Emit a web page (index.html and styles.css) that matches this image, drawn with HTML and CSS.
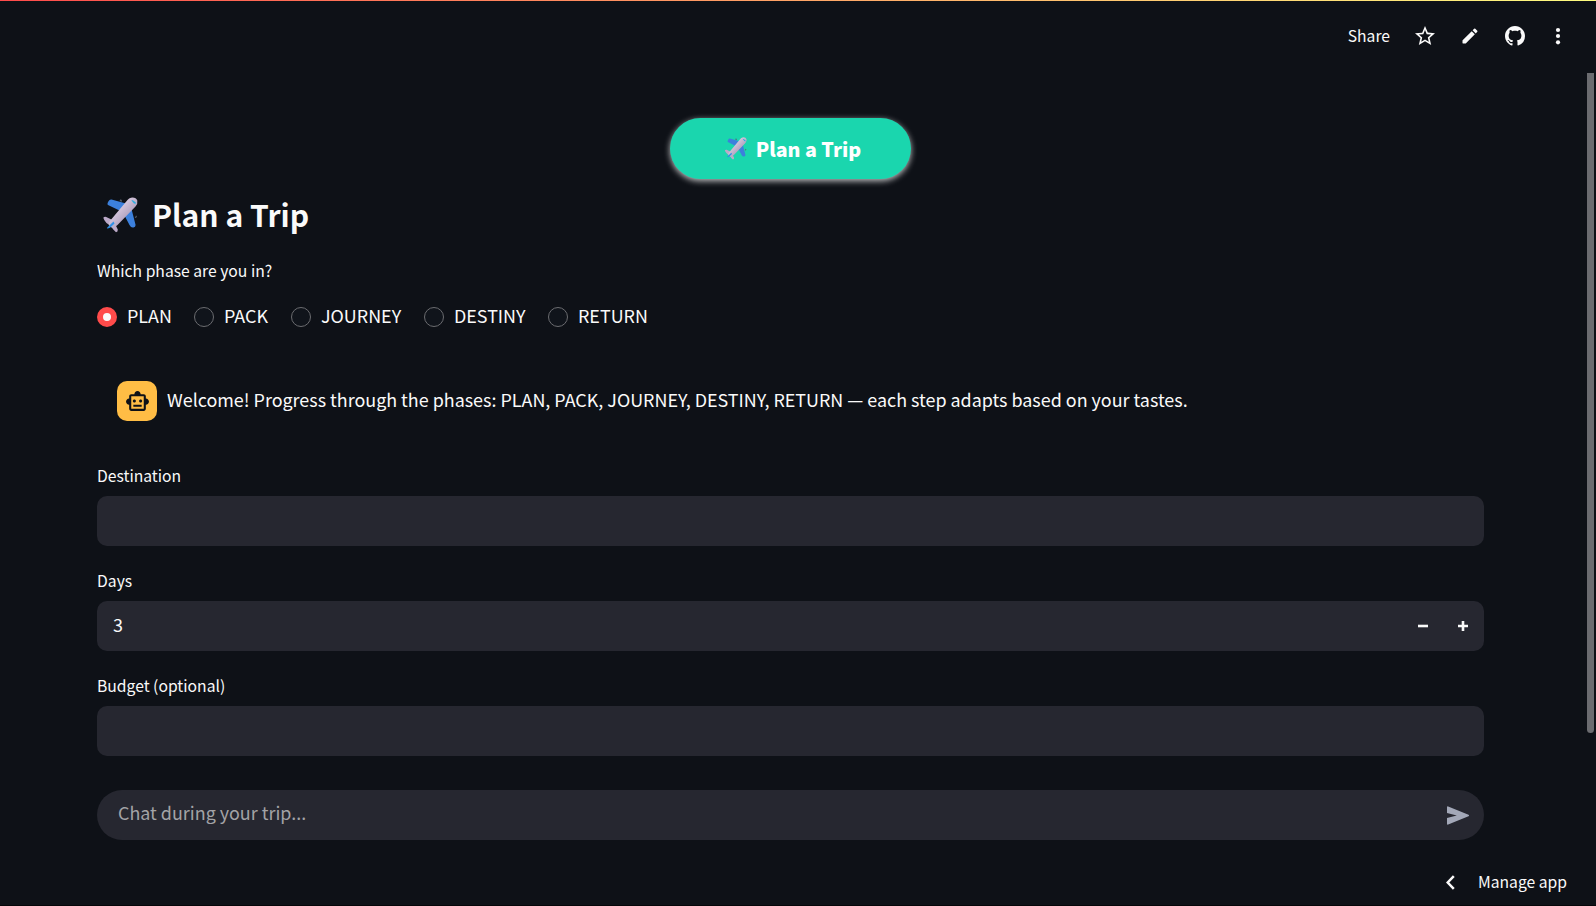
FILE: index.html
```html
<!DOCTYPE html>
<html lang="en">
<head>
<meta charset="utf-8">
<title>Plan a Trip</title>
<link rel="stylesheet" href="styles.css">
</head>
<body>
<svg class="defs" width="0" height="0" aria-hidden="true">
  <defs>
    <linearGradient id="fuselage" x1="0" y1="0" x2="1" y2="1">
      <stop offset="0.3" stop-color="#dccde2"/>
      <stop offset="0.7" stop-color="#ab9cba"/>
    </linearGradient>
    <symbol id="plane" viewBox="0 0 36 36">
      <path d="M17.5 3.2l1.3-.9 1.2 1-.7 2zM34 18.5l1 .8-.8 1.5-1.600.5z" fill="#555b66"/>
      <path d="M6.500 4.200Q7.500 2.200 9.500 2.500L24 6.500 17.500 13.500 6 8Q4.800 7 6.500 4.200z" fill="#3c80dc"/>
      <path d="M29.500 12L33.600 28Q33.500 30 31.500 30.500 29 31 27.500 28L22.500 18.500z" fill="#3c80dc"/>
      <path d="M1.300 20.800Q2.200 19.500 4.200 20L9.500 22.500 12.800 26.500 15.800 32.500Q16 35 14 35.200 10.500 33 9 28.500 3 26.500 1.300 20.800z" fill="#bba9c8"/>
      <path d="M29 .7Q34 0 35.300 3.500 36 7 33.500 9.500L15.500 28Q12 31.500 9.500 30.500 5.300 29 7.500 24.500L25.500 3Q27 1.300 29 .7z" fill="url(#fuselage)"/>
      <path d="M29.300 3.200L30.800 3.200 33.800 5.500 33.500 7 31.800 6.200z" fill="#2daee0"/>
      <path d="M11.500 24.500L5.300 30.500Q4.300 31.600 5.800 31.500L8 30.800 12.500 26.500z" fill="#2f8fe5"/>
    </symbol>
  </defs>
</svg>
<div class="app">
  <div class="rainbow"></div>
  <header class="toolbar">
    <span class="share">Share</span>
    <svg class="tool star" viewBox="0 0 24 24" width="24" height="24"><path d="M22 9.240l-7.190-.620L12 2 9.190 8.630 2 9.240l5.460 4.730L5.820 21 12 17.270 18.180 21l-1.630-7.030L22 9.240zM12 15.400l-3.760 2.270 1-4.280-3.320-2.880 4.380-.380L12 6.100l1.710 4.040 4.380.380-3.320 2.880 1 4.280L12 15.400z"/></svg>
    <svg class="tool pencil" viewBox="0 0 24 24" width="20" height="20"><path d="M3 17.460v3.040c0 .280.220.5.5.5h3.040c.130 0 .260-.050.350-.150L17.810 9.940l-3.750-3.750L3.150 17.100c-.1.100-.150.220-.150.360zM20.710 7.040a.996.996 0 000-1.410l-2.340-2.340a.996.996 0 00-1.410 0l-1.830 1.830 3.750 3.750 1.830-1.830z"/></svg>
    <svg class="tool github" viewBox="0 0 16 16" width="20" height="20"><path d="M8 0C3.580 0 0 3.580 0 8c0 3.540 2.290 6.530 5.470 7.590.4.070.55-.17.55-.38 0-.19-.01-.82-.01-1.490-2.010.37-2.530-.49-2.690-.94-.09-.23-.48-.94-.82-1.130-.28-.15-.68-.52-.01-.53.63-.01 1.080.58 1.230.82.72 1.210 1.870.87 2.330.66.07-.52.28-.87.51-1.070-1.780-.2-3.640-.89-3.640-3.950 0-.87.31-1.590.82-2.150-.08-.2-.36-1.020.08-2.120 0 0 .67-.21 2.200.82.64-.18 1.320-.27 2-.27s1.360.09 2 .27c1.530-1.040 2.200-.82 2.200-.82.44 1.100.16 1.920.08 2.120.51.56.82 1.270.82 2.150 0 3.070-1.870 3.750-3.650 3.950.29.25.54.73.54 1.480 0 1.070-.01 1.930-.01 2.200 0 .21.15.46.55.38A8.010 8.010 0 0016 8c0-4.420-3.580-8-8-8z"/></svg>
    <svg class="tool dots" viewBox="0 0 6 18" width="6" height="18"><circle cx="3" cy="3" r="2.100"/><circle cx="3" cy="9" r="2.100"/><circle cx="3" cy="15.300" r="2.100"/></svg>
  </header>
  <main class="content">
    <button class="cta"><svg class="plane-small"><use href="#plane"/></svg><span class="cta-text">Plan a Trip</span></button>
    <h1 class="title"><svg class="plane-large"><use href="#plane"/></svg><span class="title-text">Plan a Trip</span></h1>
    <div class="label phase-label">Which phase are you in?</div>
    <div class="radios">
      <div class="radio plan"><i class="ring on"></i><span>PLAN</span></div>
      <div class="radio pack"><i class="ring"></i><span>PACK</span></div>
      <div class="radio journey"><i class="ring"></i><span>JOURNEY</span></div>
      <div class="radio destiny"><i class="ring"></i><span>DESTINY</span></div>
      <div class="radio return"><i class="ring"></i><span>RETURN</span></div>
    </div>
    <div class="message">
      <div class="avatar"><svg viewBox="0 0 24 24" width="25" height="25"><path d="M20 9V7c0-1.100-.9-2-2-2h-3c0-1.660-1.340-3-3-3S9 3.340 9 5H6c-1.100 0-2 .9-2 2v2c-1.660 0-3 1.340-3 3s1.340 3 3 3v4c0 1.100.9 2 2 2h12c1.100 0 2-.9 2-2v-4c1.660 0 3-1.340 3-3s-1.340-3-3-3zm-2 10H6V7h12v12zm-9-6c-.83 0-1.500-.67-1.500-1.500S8.170 10 9 10s1.500.67 1.500 1.500S9.830 13 9 13zm7.500-1.500c0 .83-.67 1.500-1.500 1.500s-1.500-.67-1.500-1.500.67-1.500 1.500-1.500 1.500.67 1.500 1.500zM8 15h8v2H8v-2z"/></svg></div>
      <span class="message-text">Welcome! Progress through the phases: PLAN, PACK, JOURNEY, DESTINY, RETURN — each step adapts based on your tastes.</span>
    </div>
    <div class="field"><div class="label">Destination</div><div class="input"></div></div>
    <div class="field"><div class="label">Days</div><div class="input"><span class="value">3</span>
      <svg class="step" viewBox="0 0 10 10" width="10" height="10"><path d="M0 3.700h10v2.600H0z"/></svg>
      <svg class="step" viewBox="0 0 10 10" width="10" height="10"><path d="M0 3.700h3.700V0h2.600v3.700H10v2.600H6.300V10H3.700V6.300H0z"/></svg></div></div>
    <div class="field"><div class="label">Budget (optional)</div><div class="input"></div></div>
    <div class="chat"><span class="placeholder">Chat during your trip...</span>
      <svg class="send" viewBox="0 0 22 19" width="22" height="19"><path d="M0 1.300Q0 0 1.200.4L21.500 8.700Q22.600 9.500 21.500 10.300L1.200 18.600Q0 19 0 17.700V12L9.800 9.500 0 7z"/></svg></div>
  </main>
  <footer class="manage">
    <svg class="chevron" viewBox="0 0 9 15" width="9" height="15"><path d="M7.800 1.200L1.700 7.500l6.100 6.300"/></svg>
    <span class="manage-text">Manage app</span>
  </footer>
  <div class="scrollbar"></div>
</div>
</body>
</html>
```
FILE: styles.css
```css
* { box-sizing: border-box; }
body {
  margin: 0;
  background: #0e1117;
  color: #fafafa;
  font-family: "Noto Sans CJK SC", "Noto Sans", sans-serif;
  font-size: 17.910px;
}
.defs { position: absolute; }
.app {
  position: relative;
  width: 1596px;
  height: 906px;
  overflow: hidden;
  display: flex;
  flex-direction: column;
  border-bottom: 1px solid #050609;
}
.rainbow { height: 1px; flex: none; background: linear-gradient(to right, #ff4b4b, #fffd80); }
.toolbar {
  height: 70px;
  flex: none;
  display: flex;
  align-items: center;
  justify-content: flex-end;
  padding: 0 35px 1px 0;
}
.share { font-size: 15.700px; padding-bottom: 1px; }
.tool { fill: #fafafa; flex: none; }
.star { margin-left: 23px; }
.pencil { margin-left: 23px; }
.github { margin-left: 25px; }
.dots { margin-left: 30px; }
.content {
  padding: 47px 112px 0 97px;
  display: flex;
  flex-direction: column;
}
.cta {
  align-self: center;
  width: 241px;
  height: 61px;
  border: 0;
  border-radius: 31px;
  background: #1ad6ae;
  box-shadow: 0 2px 6px rgba(255, 255, 255, 0.75);
  color: #fff;
  display: flex;
  align-items: center;
  justify-content: center;
  gap: 9px;
  padding: 0 0 0 4px;
  font: 900 19.600px "Noto Sans CJK SC", sans-serif;
}
.plane-small { width: 23px; height: 23px; }
.title {
  margin: 0;
  height: 72px;
  padding-left: 5px;
  display: flex;
  align-items: center;
  gap: 14px;
  font-size: 30.100px;
  font-weight: 700;
}
.title-text { padding-bottom: 2px; }
.plane-large { width: 36px; height: 36px; }
.label { font-size: 15.700px; line-height: 20px; white-space: nowrap; }
.phase-label { margin-top: 10px; }
.radios { display: flex; margin-top: 26px; height: 20px; }
.radio { display: flex; align-items: center; gap: 10px; white-space: nowrap; line-height: 20px; height: 20px; }
.radio span { padding-bottom: 4px; }
.plan, .pack { width: 97px; }
.journey { width: 133px; }
.destiny { width: 124px; }
.ring { width: 20px; height: 20px; flex: none; border-radius: 50%; border: 1px solid #6b6c70; background: #10141b; }
.on { border: 6px solid #ff4b4b; background: #fafafa; }
.message { display: flex; align-items: center; gap: 10px; margin: 54px 0 45px 20px; height: 40px; white-space: nowrap; }
.message-text { padding-bottom: 4px; }
.avatar { width: 40px; height: 40px; border-radius: 10px; background: #ffbd45; display: grid; place-items: center; flex: none; }
.avatar svg { fill: #0e1117; }
.field { height: 105px; display: flex; flex-direction: column; gap: 10px; }
.input, .chat { height: 50px; background: #262730; display: flex; align-items: center; flex: none; }
.input { border-radius: 10px; padding: 0 16px; gap: 30px; }
.value { margin-right: auto; padding-bottom: 4px; }
.step { fill: #fafafa; }
.chat { border-radius: 25px; padding: 0 15px 0 21px; justify-content: space-between; margin-top: 9px; }
.placeholder { color: #a3a3a6; padding-bottom: 6px; }
.send { fill: #a3a8b8; }
.manage { display: flex; align-items: center; justify-content: flex-end; margin-top: 22px; height: 40px; padding-right: 29px; gap: 23px; }
.manage-text { font-size: 15.700px; padding-bottom: 2px; }
.chevron { fill: none; stroke: #fafafa; stroke-width: 2.500; }
.scrollbar { position: absolute; left: 1587px; top: 73px; width: 7px; height: 660px; border-radius: 0 0 4px 4px; background: #6b6c70; }
```
